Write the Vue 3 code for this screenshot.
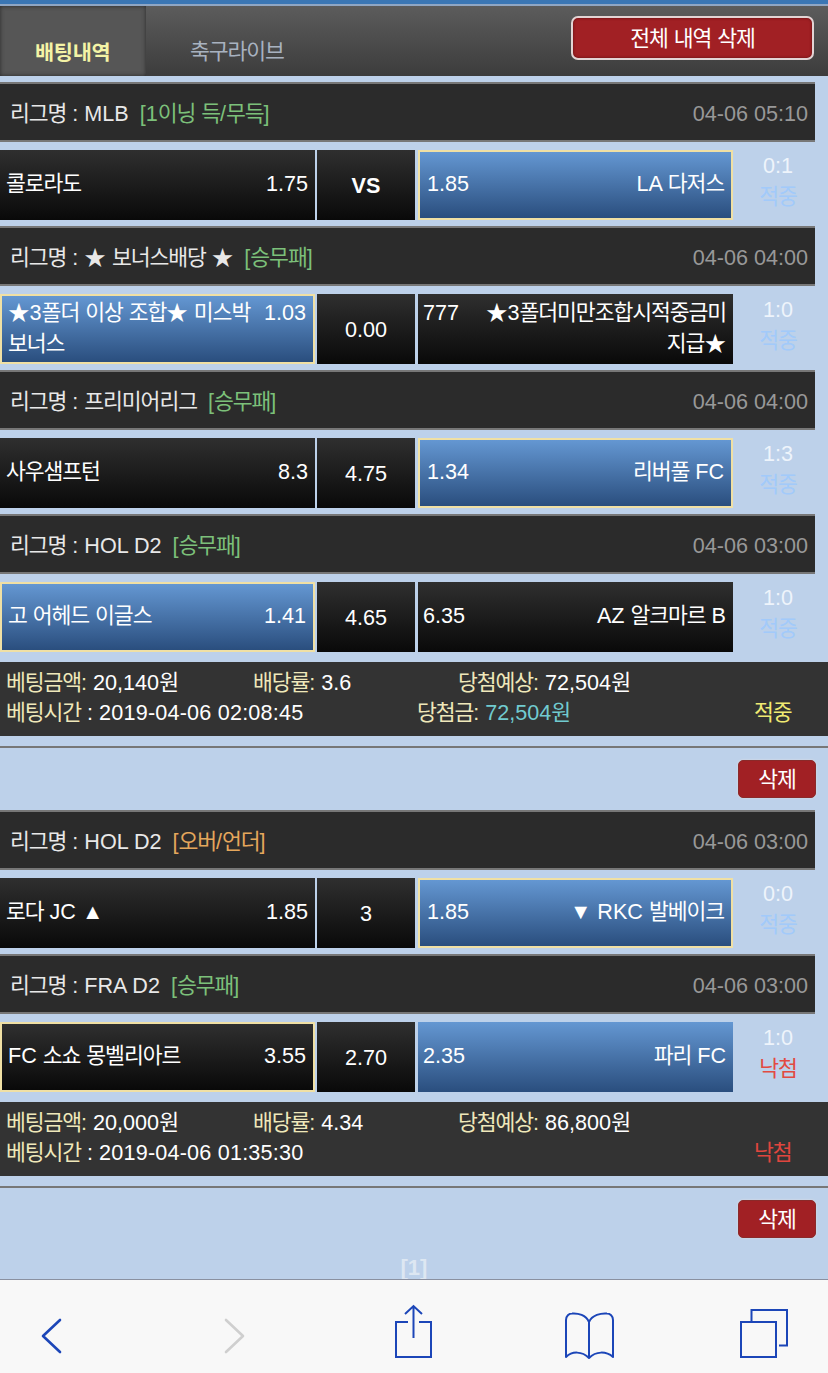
<template>
  <div class="page">
    <div class="top-line"></div>
    <div class="tabs">
      <div class="tab active">배팅내역</div>
      <div class="tab"><Ko text="축구라이브" /></div>
      <button class="btn btn-all"><Ko text="전체 내역 삭제" /></button>
    </div>

    <div class="list">
      <section v-for="bet in bets" :key="bet.time" class="bet">
        <template v-for="game in bet.games" :key="game.league">
          <div class="league">
            <span><Ko :text="'리그명 : ' + game.league" /></span>
            <span class="tag" :class="game.tagClass"><Ko :text="game.tag" /></span>
            <span class="date">{{ game.date }}</span>
          </div>
          <div class="game">
            <div class="cell home" :class="cellClass(game, 'home')">
              <div class="cell-in">
                <span class="odd-r">{{ game.homeOdd }}</span><Ko :text="game.home" />
              </div>
            </div>
            <div class="cell mid dark" :class="{ vs: game.mid === 'VS' }">{{ game.mid }}</div>
            <div class="cell away" :class="cellClass(game, 'away')">
              <div class="cell-in">
                <span class="odd-l">{{ game.awayOdd }}</span><Ko :text="game.away" />
              </div>
            </div>
            <div class="score">
              <div>{{ game.score }}</div>
              <div :class="game.result === '낙첨' ? 'lost' : 'won'"><Ko :text="game.result" /></div>
            </div>
          </div>
        </template>

        <div class="info">
          <div class="info-row first">
            <div><span class="lb"><Ko text="베팅금액:" /></span> <Ko :text="bet.amount" /></div>
            <div><span class="lb"><Ko text="배당률:" /></span> {{ bet.rate }}</div>
            <div><span class="lb"><Ko text="당첨예상:" /></span> <Ko :text="bet.expect" /></div>
          </div>
          <div class="info-row second">
            <div><span class="lb"><Ko text="베팅시간" /></span> : <span class="time">{{ bet.time }}</span></div>
            <div><template v-if="bet.prize"><span class="lb"><Ko text="당첨금:" /></span> <span class="prize"><Ko :text="bet.prize" /></span></template></div>
            <div :class="bet.state === '낙첨' ? 'st-lost' : 'st-won'"><Ko :text="bet.state" /></div>
          </div>
        </div>
        <div class="divider"></div>
        <div class="actions"><button class="btn btn-del"><Ko text="삭제" /></button></div>
      </section>
      <div class="pager">[1]</div>
    </div>

    <nav class="toolbar">
      <svg viewBox="21 1300 60 70" class="ico">
        <path d="M60 1320 L43 1336 L60 1352" fill="none" stroke="#1c46b8" stroke-width="2.6" stroke-linecap="round" stroke-linejoin="round" />
      </svg>
      <svg viewBox="204 1300 60 70" class="ico">
        <path d="M226 1320 L243 1336 L226 1352" fill="none" stroke="#cfcfcf" stroke-width="2.6" stroke-linecap="round" stroke-linejoin="round" />
      </svg>
      <svg viewBox="383 1300 60 70" class="ico">
        <path d="M408 1322 H396 V1357 H431 V1322 H419 M413.500 1338 V1306.500 M405 1314 L413.500 1306 L422 1314" fill="none" stroke="#1c46b8" stroke-width="2" />
      </svg>
      <svg viewBox="559 1300 60 70" class="ico">
        <path d="M589 1357 V1322 C586 1315 578 1313 572 1313.500 C569 1313.500 566 1316 566 1320 V1357 C572 1351 582 1351 589 1358 C596 1351 606 1351 613 1357 V1320 C613 1316 610 1313.500 607 1313.500 C601 1313 592 1315 589 1322" fill="none" stroke="#1c46b8" stroke-width="2" stroke-linejoin="round" />
      </svg>
      <svg viewBox="733 1300 60 70" class="ico">
        <path d="M741 1322 H776 V1357 H741 Z M751.500 1321 V1310 H787 V1345.500 H779" fill="none" stroke="#1c46b8" stroke-width="2" />
      </svg>
    </nav>
  </div>
</template>

<script setup>
import { h } from 'vue'

// hangul runs are set a bit tighter than the latin around them
const Ko = (props) =>
  props.text.split(/([가-힣]+)/).map((part) =>
    /[가-힣]/.test(part) ? h('span', { class: 'ko' }, part) : part
  )
Ko.props = ['text']

const cellClass = (game, side) => {
  const blue = game.blue ? game.blue === side : game.pick === side
  return [blue ? 'blue' : 'dark', game.pick === side ? 'picked' : '']
}

const bets = [
  {
    amount: '20,140원',
    rate: '3.6',
    expect: '72,504원',
    time: '2019-04-06 02:08:45',
    prize: '72,504원',
    state: '적중',
    games: [
      { league: 'MLB', tag: '[1이닝 득/무득]', tagClass: 'green', date: '04-06 05:10', home: '콜로라도', homeOdd: '1.75', mid: 'VS', away: 'LA 다저스', awayOdd: '1.85', pick: 'away', score: '0:1', result: '적중' },
      { league: '★ 보너스배당 ★', tag: '[승무패]', tagClass: 'green', date: '04-06 04:00', home: '★3폴더 이상 조합★ 미스박 보너스', homeOdd: '1.03', mid: '0.00', away: '★3폴더미만조합시적중금미지급★', awayOdd: '777', pick: 'home', score: '1:0', result: '적중' },
      { league: '프리미어리그', tag: '[승무패]', tagClass: 'green', date: '04-06 04:00', home: '사우샘프턴', homeOdd: '8.3', mid: '4.75', away: '리버풀 FC', awayOdd: '1.34', pick: 'away', score: '1:3', result: '적중' },
      { league: 'HOL D2', tag: '[승무패]', tagClass: 'green', date: '04-06 03:00', home: '고 어헤드 이글스', homeOdd: '1.41', mid: '4.65', away: 'AZ 알크마르 B', awayOdd: '6.35', pick: 'home', score: '1:0', result: '적중' }
    ]
  },
  {
    amount: '20,000원',
    rate: '4.34',
    expect: '86,800원',
    time: '2019-04-06 01:35:30',
    prize: '',
    state: '낙첨',
    games: [
      { league: 'HOL D2', tag: '[오버/언더]', tagClass: 'orange', date: '04-06 03:00', home: '로다 JC ▲', homeOdd: '1.85', mid: '3', away: '▼ RKC 발베이크', awayOdd: '1.85', pick: 'away', score: '0:0', result: '적중' },
      { league: 'FRA D2', tag: '[승무패]', tagClass: 'green', date: '04-06 03:00', home: 'FC 소쇼 몽벨리아르', homeOdd: '3.55', mid: '2.70', away: '파리 FC', awayOdd: '2.35', pick: 'home', blue: 'away', score: '1:0', result: '낙첨' }
    ]
  }
]
</script>

<style>
.ko {
  letter-spacing: -1.1px;
}
</style>

<style scoped>
.page {
  width: 828px;
  height: 1373px;
  display: flex;
  flex-direction: column;
  overflow: hidden;
  background: #bdd1ea;
  font-family: "Liberation Sans", "Noto Sans CJK KR", sans-serif;
  font-size: 21.6px;
  color: #fff;
}

.top-line {
  height: 4px;
  flex: none;
  background: #3a76b4;
  border-bottom: 2px solid #8fa6c4;
}

.tabs {
  height: 70px;
  flex: none;
  display: flex;
  background: linear-gradient(#5c5c5c, #3c3c3c);
}

.tab {
  padding-top: 31px;
  line-height: 30px;
  color: #a8b2c0;
}

.tab:nth-child(2) {
  margin-left: 44px;
}

.tab.active {
  width: 146px;
  box-sizing: border-box;
  padding: 32px 0 0 35px;
  font-weight: bold;
  font-size: 20.8px;
  letter-spacing: -0.3px;
  color: #f4f4a6;
  background: #565656;
  box-shadow: inset 0 0 4px #2a2a2a;
}

.btn {
  font-family: inherit;
  color: #fff;
  background: #a12024;
}

.btn-all {
  width: 243px;
  height: 44px;
  margin: 10px 14px 0 auto;
  padding: 0 0 4px;
  border: 2px solid #e2d4d4;
  border-radius: 7px;
  font-size: 21.6px;
  box-shadow: inset 0 0 3px #5a1010;
}

.btn-del {
  width: 78px;
  height: 38px;
  padding: 0 0 4px;
  border: 1px solid #8a2a2a;
  border-radius: 5px;
  font-size: 21.6px;
  box-shadow: 0 0 2px #e8e0e0;
}

.list {
  flex: 1;
  min-height: 0;
  padding-top: 6px;
}

.league {
  width: 815px;
  height: 60px;
  box-sizing: border-box;
  display: flex;
  align-items: baseline;
  padding: 2px 7px 0 10px;
  line-height: 56px;
  background: #2b2b2b;
  border-top: 2px solid #777;
  border-bottom: 2px solid #777;
  color: #e8e8e8;
}

.tag {
  margin-left: 11px;
}

.green {
  color: #7cc07a;
}

.orange {
  color: #e5a75c;
}

.date {
  margin-left: auto;
  color: #989898;
}

.game {
  height: 70px;
  margin: 8px 0 6px;
  display: flex;
}

.cell {
  box-sizing: border-box;
  display: flex;
  align-items: center;
  line-height: 31px;
}

.cell-in {
  width: 100%;
}

.dark {
  background: linear-gradient(#2f2f2f, #090909);
}

.blue {
  background: linear-gradient(#6497d2, #2a4e7e);
}

.picked {
  border: 2px solid #f0e0a4;
}

.home {
  width: 315px;
  padding: 0 7px 3px 6px;
}

.mid {
  width: 98px;
  margin: 0 3px 0 2px;
  justify-content: center;
}

.mid.vs {
  font-weight: bold;
}

.away {
  width: 315px;
  padding: 0 7px 3px 5px;
  text-align: right;
}

.away.picked {
  padding-left: 7px;
}

.odd-r {
  float: right;
  margin-left: 10px;
}

.odd-l {
  float: left;
  margin-right: 24px;
}

.score {
  width: 90px;
  text-align: center;
  line-height: 31px;
  color: #eef4fb;
}

.won {
  color: #a2cafa;
}

.lost {
  color: #e24a42;
}

.info {
  height: 74px;
  margin-top: 10px;
  box-sizing: border-box;
  padding: 6px 7px 4px 6px;
  background: #333;
}

.info-row {
  display: grid;
  line-height: 30px;
}

.first {
  grid-template-columns: 247px 205px 1fr;
}

.second {
  grid-template-columns: 411px 337px 1fr;
}

.time {
  letter-spacing: 0.2px;
}

.lb {
  color: #efe8ba;
}

.prize {
  color: #71cbd0;
}

.st-won {
  color: #f0ea72;
}

.st-lost {
  color: #e0463e;
}

.divider {
  height: 2px;
  margin-top: 10px;
  background: #777;
}

.actions {
  display: flex;
  justify-content: flex-end;
  padding: 12px 12px 12px 0;
}

.pager {
  margin-top: 7px;
  text-align: center;
  font-weight: bold;
  font-size: 22px;
  line-height: 21px;
  color: #dde7f2;
}

.toolbar {
  height: 94px;
  flex: none;
  box-sizing: border-box;
  display: grid;
  grid-template-columns: 102px 264px 94px 258px 90px;
  justify-items: center;
  align-items: start;
  padding-top: 20px;
  background: #f8f8f8;
  border-top: 1px solid #8a90a0;
}

.ico {
  width: 60px;
  height: 70px;
}
</style>
